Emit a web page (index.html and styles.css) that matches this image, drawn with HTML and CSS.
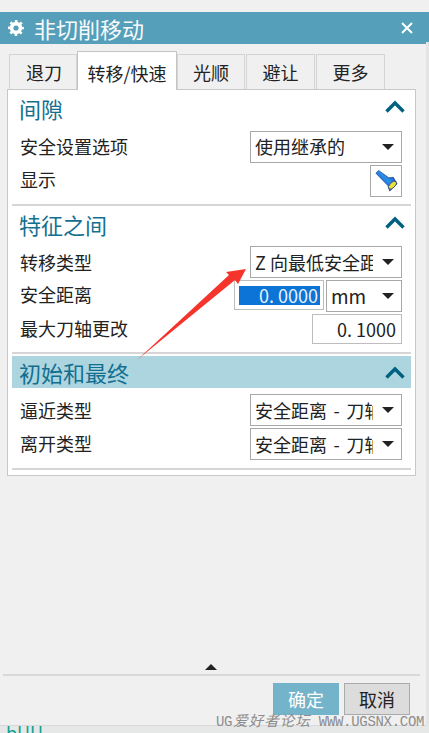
FILE: index.html
```html
<!DOCTYPE html>
<html lang="zh">
<head>
<meta charset="utf-8">
<title>非切削移动</title>
<link rel="stylesheet" href="styles.css">
</head>
<body>
<div class="page">
  <header class="titlebar">
    <svg class="gear" width="16" height="16" viewBox="0 0 16 16"><circle cx="8" cy="8" r="4.400" fill="none" stroke="#fff" stroke-width="3.600"/><circle cx="8" cy="8" r="6.600" fill="none" stroke="#fff" stroke-width="2.600" stroke-dasharray="2.600 2.580" stroke-dashoffset="1.300"/></svg>
    <span class="title">非切削移动</span>
    <svg class="close" width="12" height="12" viewBox="0 0 12 12"><path d="M1 1l10 10M11 1L1 11" stroke="#fff" stroke-width="2"/></svg>
  </header>
  <div class="edge"></div>
  <nav class="tabs">
    <div class="tab t1">退刀</div>
    <div class="tab active">转移/快速</div>
    <div class="tab t3">光顺</div>
    <div class="tab t4">避让</div>
    <div class="tab t5">更多</div>
  </nav>
  <main class="panel">
    <section class="group g1">
      <div class="head"><span>间隙</span><svg class="chev" width="20" height="13" viewBox="0 0 20 13"><path d="M1.500 11.500L10 3l8.500 8.500" fill="none" stroke="#00607f" stroke-width="3.400"/></svg></div>
      <div class="row r-first"><label>安全设置选项</label><div class="select"><span class="val">使用继承的</span><i class="caret"></i></div></div>
      <div class="row r2"><label>显示</label>
        <div class="iconbtn">
          <svg width="24" height="24" viewBox="0 0 26 26">
            <defs><linearGradient id="b" x1="0" y1="1" x2="1" y2="0"><stop offset="0" stop-color="#0a2fd0"/><stop offset=".55" stop-color="#2a8fe8"/><stop offset="1" stop-color="#0b2aa8"/></linearGradient></defs>
            <path d="M2 4.500L5 1.500 16 9.500 21 9 25 16 17 24 15 18z" fill="url(#b)" stroke="#0a2370" stroke-width=".6"/>
            <ellipse cx="20" cy="17.500" rx="5.400" ry="2.800" transform="rotate(-45 20 17.500)" fill="#e8e23a" stroke="#1a2f80" stroke-width=".8"/>
          </svg>
        </div>
      </div>
    </section>
    <section class="group g2">
      <div class="head"><span>特征之间</span><svg class="chev" width="20" height="13" viewBox="0 0 20 13"><path d="M1.500 11.500L10 3l8.500 8.500" fill="none" stroke="#00607f" stroke-width="3.400"/></svg></div>
      <div class="row r-first"><label>转移类型</label><div class="select"><span class="val tight">Z 向最低安全距离</span><i class="caret"></i></div></div>
      <div class="row r3"><label>安全距离</label>
        <div class="pair">
          <div class="num wide"><span class="sel">0. 0000</span></div>
          <div class="select mm"><span class="val">mm</span><i class="caret"></i></div>
        </div>
      </div>
      <div class="row r4"><label>最大刀轴更改</label><div class="num"><span class="plain">0. 1000</span></div></div>
    </section>
    <section class="group g3">
      <div class="head hl"><span>初始和最终</span><svg class="chev" width="20" height="13" viewBox="0 0 20 13"><path d="M1.500 11.500L10 3l8.500 8.500" fill="none" stroke="#00607f" stroke-width="3.400"/></svg></div>
      <div class="row r5"><label>逼近类型</label><div class="select"><span class="val">安全距离 - 刀轴</span><i class="caret"></i></div></div>
      <div class="row r6"><label>离开类型</label><div class="select"><span class="val">安全距离 - 刀轴</span><i class="caret"></i></div></div>
    </section>
  </main>
  <div class="spacer"></div>
  <div class="more"><i></i></div>
  <footer class="actions">
    <button class="btn ok">确定</button>
    <button class="btn cancel">取消</button>
  </footer>
  <div class="behind"><span>bUU</span></div>
  <svg class="arrow" width="429" height="733" viewBox="0 0 429 733"><path d="M137 360L229 275 226 272 246 269 238 284 235 280z" fill="#f5352c"/></svg>
  <div class="mark">UG<span class="cjk">爱好者论坛</span> WWW.UGSNX.COM</div>
</div>
</body>
</html>
```
FILE: styles.css
```css
* { box-sizing: border-box; }
html, body { margin: 0; padding: 0; }
body { background: #f0f0f0; font-family: "Noto Sans CJK SC", "Noto Sans", sans-serif; color: #222; }
.page { position: relative; width: 429px; height: 733px; overflow: hidden; padding-top: 12px; display: flex; flex-direction: column; }

.titlebar { height: 32px; flex: none; background: #569fba; display: flex; align-items: center; padding: 0 16px 0 8px; color: #fff; }
.gear { flex: none; }
.title { font-size: 22px; margin-left: 10px; line-height: 32px; white-space: nowrap; color: #f6fbfd; }
.close { margin-left: auto; }
.edge { position: absolute; top: 42px; right: 0; width: 3px; height: 684px; background: #e4e4e4; }

.tabs { display: flex; align-items: flex-end; height: 45px; flex: none; padding-left: 9px; position: relative; z-index: 1; }
.tab { height: 35px; border: 1px solid #d4d4d4; border-bottom: 0; background: #f0f0f0; font-size: 18px; display: flex; align-items: center; justify-content: center; line-height: 1; width: 69px; margin-right: 1px; }
.t1 { width: 68px; margin-right: 0; padding-left: 2px; }
.active { width: 100px; height: 39px; margin-bottom: -1px; background: #fff; border-color: #c4c4c4; white-space: nowrap; margin-right: 0; position: relative; z-index: 2; padding-top: 3px; }
.t3 { width: 68px; }

.panel { margin: 0 13px 0 7px; height: 387px; flex: none; background: #fff; border: 1px solid #c8c8c8; padding: 0 4px; }
.group { border-bottom: 2px solid #d6d6d6; }
.g1 { height: 116px; }
.g2 { height: 148px; }
.g3 { height: 114px; margin-top: 2px; }

.head { height: 32px; display: flex; align-items: center; justify-content: space-between; padding: 0 6px 0 7px; font-size: 22px; color: #136f8f; line-height: 1; }
.g1 .head span { padding-top: 4px; }
.g2 .head span { padding-top: 4px; }
.hl { background: #add5e0; }
.chev { flex: none; }

.row { display: flex; align-items: center; justify-content: space-between; padding: 0 9px 0 8px; font-size: 18px; line-height: 1; }
.row label { white-space: nowrap; }
.r-first { height: 32px; margin-top: 8px; }
.g1 .r-first { margin-top: 9px; }
.g1 .r-first label, .r4 label, .r6 label { padding-bottom: 2px; }
.r2 label, .r3 label { padding-bottom: 4px; }
.r2 { height: 32px; margin-top: 2px; }
.r3 { height: 32px; margin-top: 2px; }
.r4 { height: 30px; margin-top: 2px; }
.r5 { height: 32px; margin-top: 6px; }
.r6 { height: 32px; margin-top: 2px; }

.select { width: 152px; height: 32px; border: 1px solid #a8a8a8; background: #fff; display: flex; align-items: center; padding-left: 4px; position: relative; flex: none; }
.val { display: block; width: 118px; overflow: hidden; white-space: nowrap; font-size: 18px; line-height: 30px; word-spacing: 2.500px; }
.val.tight { word-spacing: 0; }
.g1 .val { line-height: 28px; height: 30px; }
.caret { position: absolute; right: 7px; top: 12px; width: 0; height: 0; border-left: 6px solid transparent; border-right: 6px solid transparent; border-top: 6px solid #222; }
.mm { width: 76px; }
.mm .val { width: 50px; font-size: 19px; }

.iconbtn { width: 32px; height: 32px; border: 1px solid #a8a8a8; display: flex; align-items: center; justify-content: center; background: #fff; }

.pair { display: flex; gap: 2px; align-items: flex-start; }
.num { width: 90px; height: 30px; border: 1px solid #bdbdbd; background: #fff; display: flex; align-items: center; justify-content: flex-end; padding-right: 5px; }
.wide { padding-right: 3px; }
.sel { display: block; width: 81px; height: 19px; background: #0c74d6; color: #e8f2fb; font-size: 18px; line-height: 19px; text-align: right; white-space: nowrap; padding-right: 2px; }
.plain { font-size: 18px; white-space: nowrap; }

.spacer { flex: 1; }
.more { height: 10px; flex: none; margin: 0 9px 0 3px; display: flex; justify-content: center; }
.more i { width: 0; height: 0; margin-left: -2px; border-left: 6px solid transparent; border-right: 6px solid transparent; border-bottom: 6px solid #222; }
.actions { flex: none; height: 51px; margin: 0 9px 0 3px; border-top: 2px solid #d8d8d8; display: flex; justify-content: flex-end; gap: 5px; padding: 7px 10px 0 0; align-items: flex-start; }
.btn { width: 66px; height: 32px; font-family: inherit; font-size: 18px; line-height: 1; padding: 0; border: 0; }
.ok { background: #74b4ca; color: #fff; }
.cancel { background: #dcdcdc; color: #222; border: 1px solid #aaa; }

.behind { flex: none; height: 8px; background: #e6e8e8; border-top: 1px solid #d8d8d8; overflow: hidden; padding-left: 6px; font-size: 18px; line-height: 18px; color: #12a090; }
.behind span { display: block; margin-top: -3px; }

.arrow { position: absolute; left: 0; top: 0; pointer-events: none; z-index: 5; }
.mark { position: absolute; left: 216px; top: 711px; z-index: 6; font-family: "Liberation Mono", monospace; font-size: 14px; line-height: 18px; color: #8d8d8d; white-space: nowrap; letter-spacing: -.3px; }
.cjk { font-family: "Noto Sans CJK SC", sans-serif; font-size: 14.500px; letter-spacing: 1px; margin-left: 1px; font-style: italic; }
```
